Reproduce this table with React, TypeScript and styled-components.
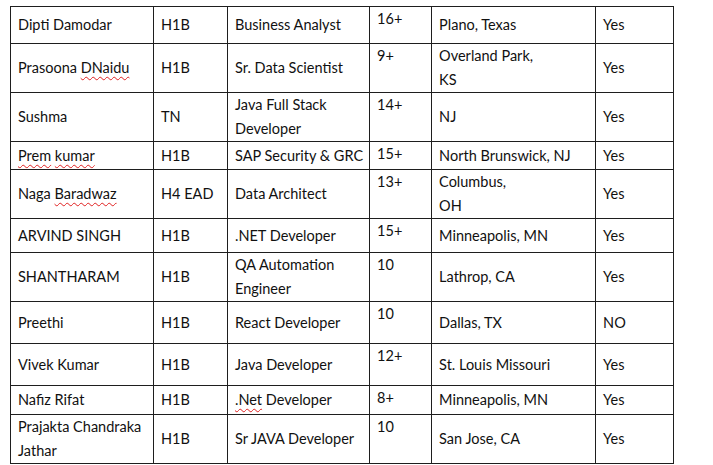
import React from "react";
import styled, { createGlobalStyle } from "styled-components";

const Global = createGlobalStyle`
  html, body { margin: 0; padding: 0; background: #fff; }
  body { font-family: Lato, "Liberation Sans", sans-serif; color: #111; overflow: hidden; height: 465px; }
`;

const Table = styled.table`
  border-collapse: collapse;
  table-layout: fixed;
  margin: 6px 0 0 10px;
  font-size: 14.5px;
  line-height: 24px;
`;

const Row = styled.tr<{ $h: number }>`
  height: ${(p) => p.$h}px;
`;

const Cell = styled.td<{ $top?: boolean }>`
  border: 1px solid #1e1e1e;
  padding: 0 6px 0 7px;
  vertical-align: ${(p) => (p.$top ? "top" : "middle")};
  white-space: nowrap;
  overflow: hidden;
`;

const Spell = styled.span`
  text-decoration: underline wavy #e02020;
  text-decoration-thickness: 1px;
  text-underline-offset: 3px;
`;

type Line = React.ReactNode;
type RowData = {
  h: number;
  name: Line;
  visa: string;
  role: Line;
  exp: string;
  loc: Line;
  relo: string;
};

const rows: RowData[] = [
  { h: 37, name: "Dipti Damodar", visa: "H1B", role: "Business Analyst", exp: "16+", loc: "Plano, Texas", relo: "Yes" },
  { h: 49, name: <>Prasoona <Spell>DNaidu</Spell></>, visa: "H1B", role: "Sr. Data Scientist", exp: "9+", loc: <>Overland Park,<br />KS</>, relo: "Yes" },
  { h: 49, name: "Sushma", visa: "TN", role: <>Java Full Stack<br />Developer</>, exp: "14+", loc: "NJ", relo: "Yes" },
  { h: 28, name: <><Spell>Prem</Spell> <Spell>kumar</Spell></>, visa: "H1B", role: "SAP Security & GRC", exp: "15+", loc: "North Brunswick, NJ", relo: "Yes" },
  { h: 49, name: <>Naga <Spell>Baradwaz</Spell></>, visa: "H4 EAD", role: "Data Architect", exp: "13+", loc: <>Columbus,<br />OH</>, relo: "Yes" },
  { h: 34, name: "ARVIND SINGH", visa: "H1B", role: ".NET Developer", exp: "15+", loc: "Minneapolis, MN", relo: "Yes" },
  { h: 49, name: "SHANTHARAM", visa: "H1B", role: <>QA Automation<br />Engineer</>, exp: "10", loc: "Lathrop, CA", relo: "Yes" },
  { h: 42, name: "Preethi", visa: "H1B", role: "React Developer", exp: "10", loc: "Dallas, TX", relo: "NO" },
  { h: 42, name: "Vivek Kumar", visa: "H1B", role: "Java Developer", exp: "12+", loc: "St. Louis Missouri", relo: "Yes" },
  { h: 29, name: "Nafiz Rifat", visa: "H1B", role: <><Spell>.Net</Spell> Developer</>, exp: "8+", loc: "Minneapolis, MN", relo: "Yes" },
  { h: 49, name: <>Prajakta Chandraka<br />Jathar</>, visa: "H1B", role: "Sr JAVA Developer", exp: "10", loc: "San Jose, CA", relo: "Yes" },
];

const widths = [143, 74, 142, 62, 164, 78];

export default function App() {
  return (
    <>
      <Global />
      <Table>
        <colgroup>
          {widths.map((w, i) => (
            <col key={i} style={{ width: w }} />
          ))}
        </colgroup>
        <tbody>
          {rows.map((r, i) => (
            <Row key={i} $h={r.h}>
              <Cell>{r.name}</Cell>
              <Cell>{r.visa}</Cell>
              <Cell>{r.role}</Cell>
              <Cell $top>{r.exp}</Cell>
              <Cell>{r.loc}</Cell>
              <Cell>{r.relo}</Cell>
            </Row>
          ))}
        </tbody>
      </Table>
    </>
  );
}
